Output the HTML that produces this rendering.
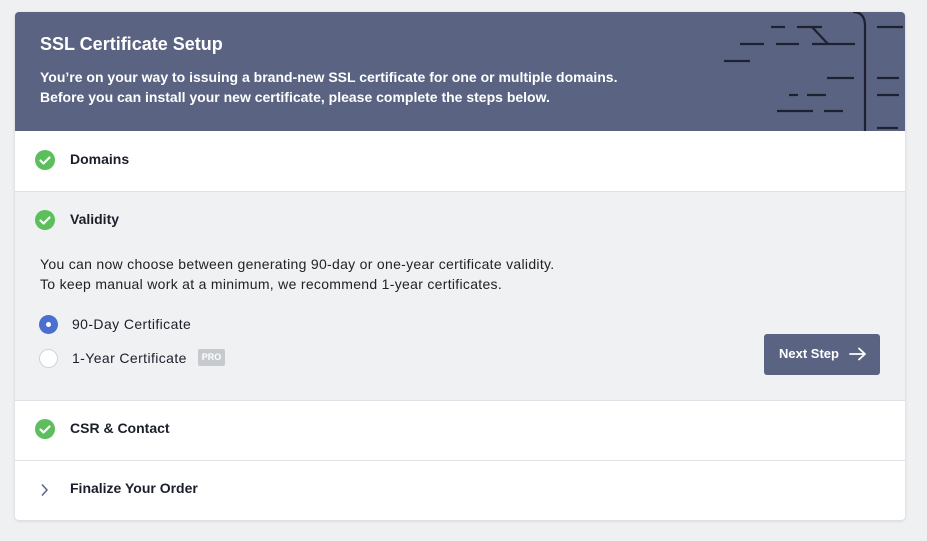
<!DOCTYPE html>
<html><head><style>
body{margin:0;background:#eff0f2;font-family:"Liberation Sans","DejaVu Sans",sans-serif;width:927px;height:541px;overflow:hidden;position:relative}
.card{position:absolute;left:15px;top:12px;width:890px;height:508px;background:#fff;border-radius:4px;box-shadow:0 1px 3px rgba(0,0,0,.12);overflow:hidden}
.hdr{position:absolute;left:0;top:0;width:890px;height:119px;background:#5a6482;color:#fff}
.hdr h1{position:absolute;left:25px;top:22px;margin:0;font-size:18px;font-weight:bold}
.hdr p{position:absolute;left:25px;top:55px;margin:0;font-size:14px;font-weight:bold;line-height:20px}
.row{position:absolute;left:0;width:890px;border-top:1px solid #dfe2e6}
.row .t{position:absolute;left:55px;font-size:14px;font-weight:bold;color:#1b1f2a}
.chk{position:absolute;left:20px;width:20px;height:20px;border-radius:50%;background:#5cbf5c}
.chk svg{position:absolute;left:0;top:0}
.txt{position:absolute;left:25px;font-size:14px;color:#222;line-height:20px;letter-spacing:.3px}
.radio{position:absolute;left:24px;width:19px;height:19px;border-radius:50%;box-sizing:border-box}
.lab{position:absolute;left:57px;font-size:14px;color:#1b1f2a;letter-spacing:.4px}
.btn{position:absolute;left:749px;top:322px;width:116px;height:41px;background:#5a6482;border-radius:3px;color:#fff;font-size:13px;font-weight:bold}
</style></head><body>
<div class="card">
 <div class="hdr">
  <h1>SSL Certificate Setup</h1>
  <p>You’re on your way to issuing a brand-new SSL certificate for one or multiple domains.<br>Before you can install your new certificate, please complete the steps below.</p>
  <svg width="890" height="119" style="position:absolute;left:0;top:0" viewBox="15 12 890 119">
   <g stroke="#1e2230" stroke-width="2.2" fill="none">
    <path d="M771 27h14M797 27h25M812 27l16 17M740 44h24M776 44h23M812 44h43M724 61h26M827 78h27M789 95h9M807 95h19M777 111h36M824 111h19"/>
    <path d="M853 12q12 0 12 14V131"/>
    <path d="M877 27h26M877 78h22M877 95h22M877 128h21"/>
   </g>
  </svg>
 </div>
 <div class="row" style="top:119px;height:60px;border-top:none">
  <div class="chk" style="top:19px"><svg width="20" height="20"><path d="M5.5 10.5l3 3 6-6" stroke="#fff" stroke-width="2.2" fill="none" stroke-linecap="round" stroke-linejoin="round"/></svg></div>
  <div class="t" style="top:20px">Domains</div>
 </div>
 <div class="row" style="top:179px;height:209px;background:#f0f1f3">
  <div class="chk" style="top:18px"><svg width="20" height="20"><path d="M5.5 10.5l3 3 6-6" stroke="#fff" stroke-width="2.2" fill="none" stroke-linecap="round" stroke-linejoin="round"/></svg></div>
  <div class="t" style="top:19px">Validity</div>
  <div class="txt" style="top:62px">You can now choose between generating 90-day or one-year certificate validity.<br>To keep manual work at a minimum, we recommend 1-year certificates.</div>
  <div class="radio" style="top:123px;background:#4a6fd1"><div style="position:absolute;left:7px;top:7px;width:5px;height:5px;border-radius:50%;background:#fff"></div></div>
  <div class="lab" style="top:124px">90-Day Certificate</div>
  <div class="radio" style="top:157px;background:#fff;border:1px solid #d0d3d8"></div>
  <div class="lab" style="top:158px">1-Year Certificate</div>
  <div style="position:absolute;left:183px;top:157px;width:27px;height:17px;background:#c6c9ce;border-radius:2px;color:#fff;font-size:9px;font-weight:bold;text-align:center;line-height:17px">PRO</div>
  <div class="btn" style="top:142px"><span style="position:absolute;left:15px;top:12px">Next Step</span>
   <svg width="18" height="14" style="position:absolute;left:85px;top:13px"><path d="M1 7h15M10 1.5l6 5.5-6 5.5" stroke="#fff" stroke-width="1.8" fill="none" stroke-linecap="round" stroke-linejoin="round"/></svg></div>
 </div>
 <div class="row" style="top:388px;height:60px">
  <div class="chk" style="top:18px"><svg width="20" height="20"><path d="M5.5 10.5l3 3 6-6" stroke="#fff" stroke-width="2.2" fill="none" stroke-linecap="round" stroke-linejoin="round"/></svg></div>
  <div class="t" style="top:19px">CSR &amp; Contact</div>
 </div>
 <div class="row" style="top:448px;height:60px">
  <svg width="10" height="14" style="position:absolute;left:25px;top:22px"><path d="M2 1.5l5 5.5-5 5.5" stroke="#5a6482" stroke-width="1.5" fill="none"/></svg>
  <div class="t" style="top:19px">Finalize Your Order</div>
 </div>
</div>
</body></html>
